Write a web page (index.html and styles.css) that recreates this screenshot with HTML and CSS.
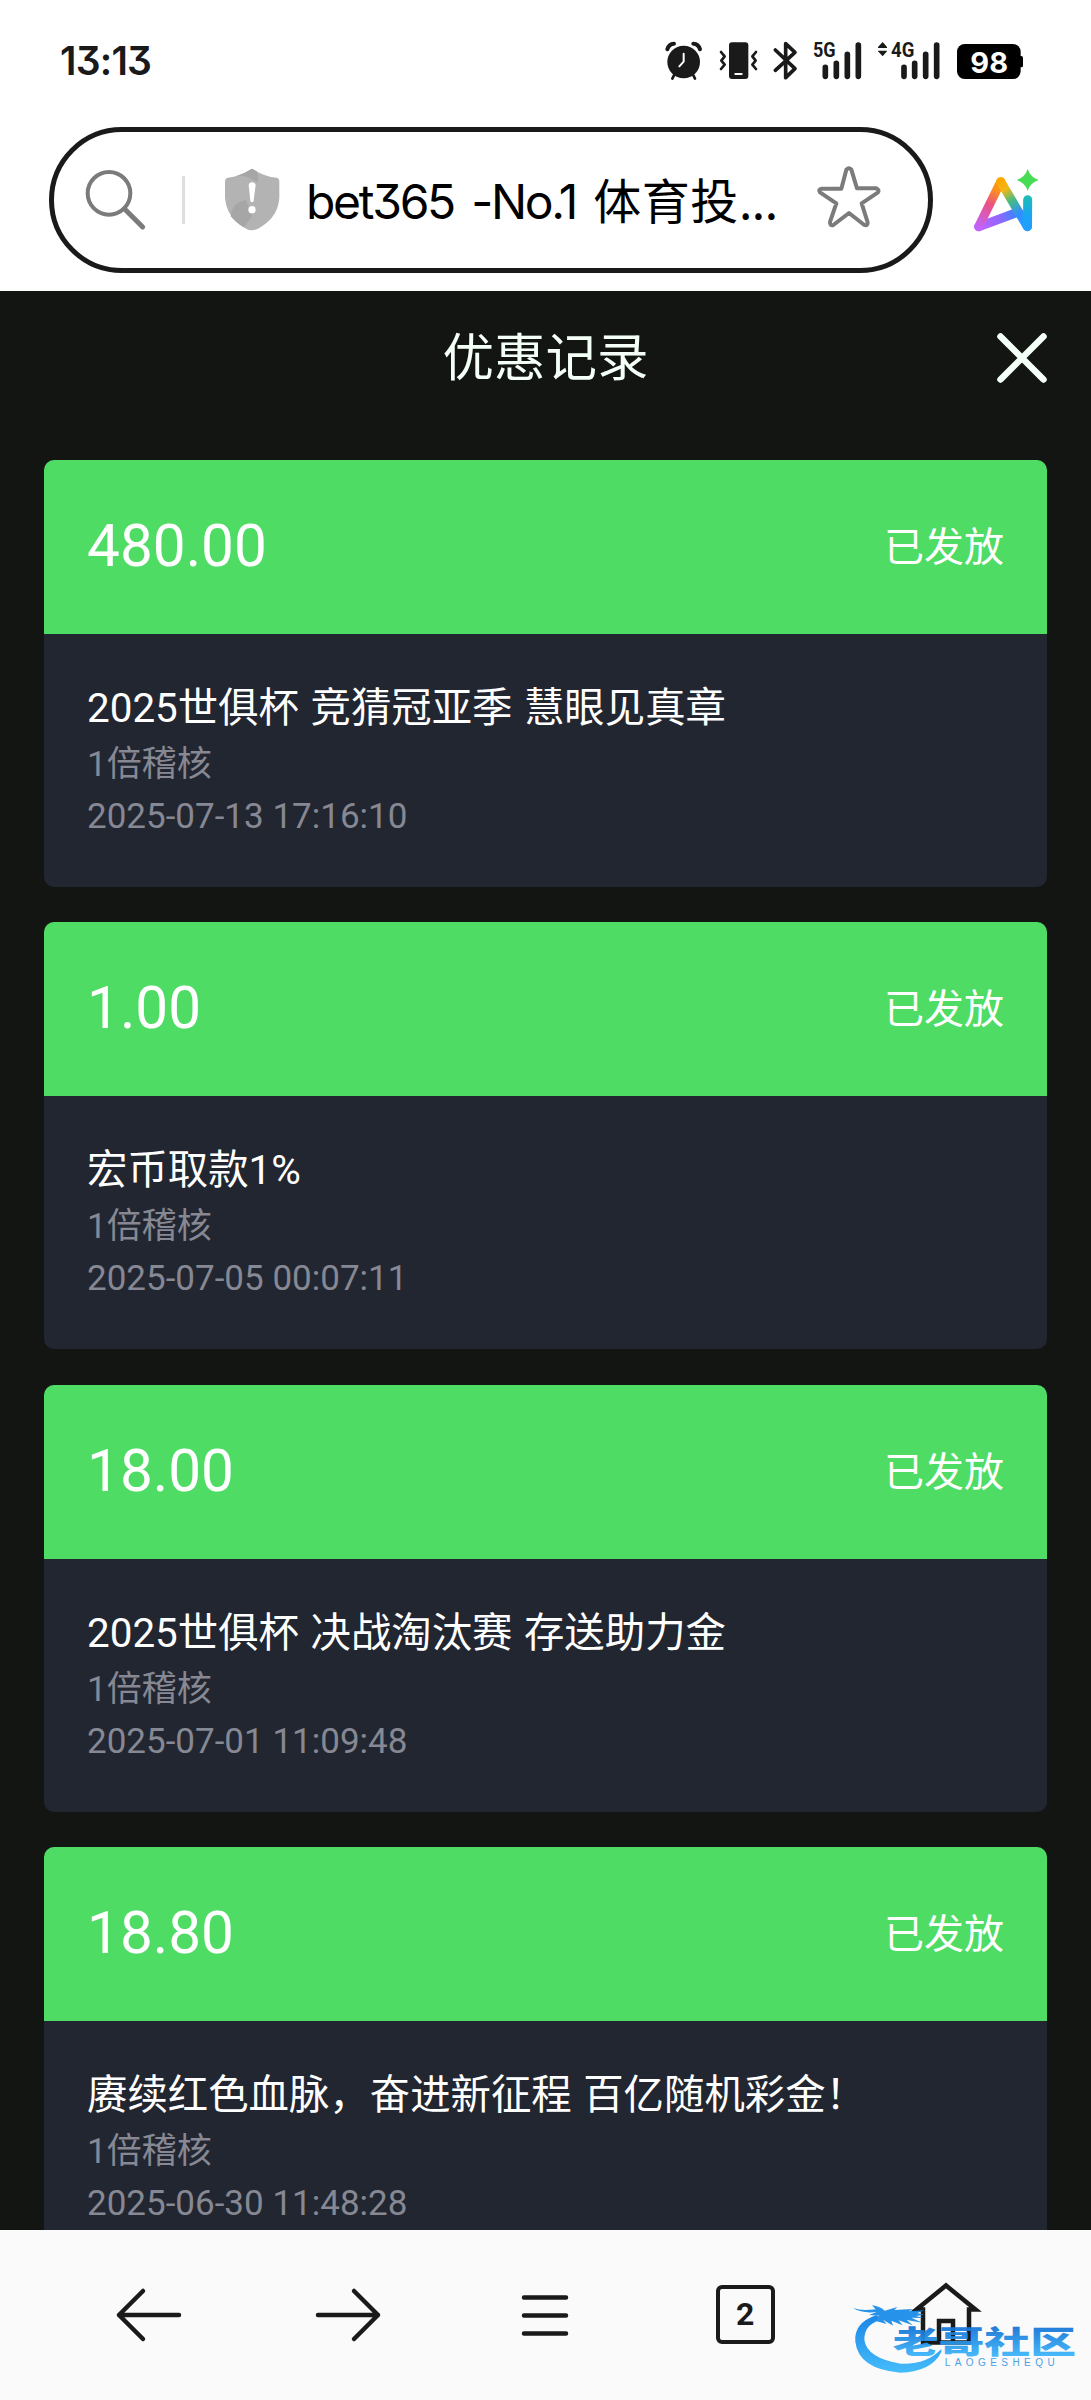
FILE: index.html
```html
<!DOCTYPE html>
<html lang="zh-CN">
<head>
<meta charset="utf-8">
<title>优惠记录</title>
<link rel="stylesheet" href="styles.css">
</head>
<body>
<header class="browser">
  <div class="status">
    <span class="clock">13:13</span>
    <div class="status-icons">
      <svg class="alarm" viewBox="75 60 114 126" width="38" height="42">
        <circle cx="131" cy="126" r="49" fill="#1a1a1a"/>
        <path d="M82 88Q86 72 102 71M180 88Q176 72 160 71" fill="none" stroke="#1a1a1a" stroke-width="12" stroke-linecap="round"/>
        <path d="M103 164l-6 12M159 164l6 12" stroke="#1a1a1a" stroke-width="8" stroke-linecap="round"/>
        <path d="M131 101V125L118 139" fill="none" stroke="#fff" stroke-width="6" stroke-linecap="round" stroke-linejoin="round"/>
      </svg>
      <svg class="vibrate" viewBox="238 60 117 126" width="39" height="42">
        <rect x="268" y="67" width="58" height="110" rx="9" fill="#1a1a1a"/>
        <path d="M287 162h19" stroke="#fff" stroke-width="6" stroke-linecap="round"/>
        <path d="M244 96l11 13-10 13 10 12-11 13M349 96l-11 13 10 13-10 12 11 13" fill="none" stroke="#1a1a1a" stroke-width="8" stroke-linecap="round" stroke-linejoin="round"/>
      </svg>
      <svg class="bluetooth" viewBox="400 60 75 126" width="25" height="42">
        <path d="M407 90L466 146L438 173V71L466 97L407 151" fill="none" stroke="#1a1a1a" stroke-width="11" stroke-linecap="round" stroke-linejoin="round"/>
      </svg>
      <svg class="signal5" viewBox="515 60 150 126" width="50" height="42">
        <text class="net" x="518" y="111" textLength="68" lengthAdjust="spacingAndGlyphs">5G</text>
        <path d="M555 142v27M588 130v39M621 103v66M654 75v94" stroke="#1a1a1a" stroke-width="17" stroke-linecap="round"/>
      </svg>
      <svg class="signal4" viewBox="711 60 192 126" width="64" height="42">
        <path d="M728 66l13 15v3h-27v-3zM728 109l13-15v-2h-27v2z" fill="#1a1a1a"/>
        <text class="net" x="753" y="111" textLength="70" lengthAdjust="spacingAndGlyphs">4G</text>
        <path d="M792 142v27M824 130v39M857 103v66M890 75v94" stroke="#1a1a1a" stroke-width="17" stroke-linecap="round"/>
      </svg>
      <svg class="battery" viewBox="951 60 201 126" width="67" height="42">
        <rect x="951" y="72" width="191" height="105" rx="23" fill="#000"/>
        <rect x="1135" y="108" width="14" height="34" rx="5" fill="#000"/>
        <text class="level" x="991" y="158" textLength="113" lengthAdjust="spacingAndGlyphs">98</text>
      </svg>
    </div>
  </div>
  <div class="address-row">
    <div class="pill">
      <svg class="search" viewBox="255 448 183 184" width="61" height="61.3" fill="none" stroke="#7b7b7b">
        <circle cx="327" cy="521" r="64" stroke-width="12"/>
        <path d="M373 567L428 622" stroke-width="15" stroke-linecap="round"/>
      </svg>
      <i class="divider"></i>
      <svg class="shield" viewBox="670 445 168 190" width="56" height="63.3">
        <path d="M754 447Q791 471 828 474Q836 476 836 486V535Q832 590 782 621Q766 632 754 632Q742 632 726 621Q678 590 673 535V486Q673 476 681 474Q717 471 754 447z" fill="#b3b3b3"/>
        <path d="M754 447Q729 463 705 470Q735 463 771 489Q774 470 768 455zM736 541Q694 548 690 590Q706 610 730 623L754 590z" fill="#a6a6a6"/>
        <path d="M744 496Q745 488 754 488Q764 488 765 496L759 543Q758 548 754 548Q750 548 749 543z" fill="#fff"/>
        <circle cx="754" cy="570" r="11" fill="#fff"/>
      </svg>
      <span class="url">bet365 -No.1 <b class="han">体育投<span class="dots">...</span></b></span>
      <svg class="star" viewBox="110 136 192 184" width="64" height="61.3">
        <path d="M198 147Q206 139 213 147L230 203H288Q299 208 292 216L244 248L262 305Q262 317 252 313L206 277L159 313Q148 316 149 304L168 248L119 215Q112 207 124 204H183z" fill="none" stroke="#7b7b7b" stroke-width="12" stroke-linejoin="round"/>
      </svg>
    </div>
    <svg class="ai" viewBox="575 144 200 192" width="66.7" height="64">
      <defs>
        <linearGradient id="ai-left" gradientUnits="userSpaceOnUse" x1="660" y1="180" x2="590" y2="325"><stop offset="0" stop-color="#ff9d00"/><stop offset=".22" stop-color="#fb9020"/><stop offset=".5" stop-color="#eb5184"/><stop offset="1" stop-color="#c064ff"/></linearGradient>
        <linearGradient id="ai-base" gradientUnits="userSpaceOnUse" x1="590" y1="320" x2="705" y2="275"><stop offset="0" stop-color="#c163ff"/><stop offset=".5" stop-color="#9666ff"/><stop offset="1" stop-color="#3b83ff"/></linearGradient>
        <linearGradient id="ai-right" gradientUnits="userSpaceOnUse" x1="658" y1="184" x2="738" y2="320"><stop offset="0" stop-color="#ffa800"/><stop offset=".18" stop-color="#efb818"/><stop offset=".42" stop-color="#45bd83"/><stop offset=".7" stop-color="#308eff"/><stop offset="1" stop-color="#1ca2ff"/></linearGradient>
        <linearGradient id="ai-stem" gradientUnits="userSpaceOnUse" x1="725" y1="225" x2="752" y2="330"><stop offset="0" stop-color="#1cc0ac"/><stop offset=".6" stop-color="#1aa4f5"/><stop offset="1" stop-color="#249cff"/></linearGradient>
      </defs>
      <g fill="none" stroke-width="27" stroke-linecap="round">
        <path d="M592 320L708 277" stroke="url(#ai-base)"/>
        <path d="M658 185L592 320" stroke="url(#ai-left)"/>
        <path d="M658 185L738 320" stroke="url(#ai-right)"/>
        <path d="M739 239L738.500 320" stroke="url(#ai-stem)"/>
      </g>
      <path d="M739 147Q747 172 772 180Q747 188 739 212Q731 188 706 180Q731 172 739 147z" fill="#48dc55"/>
    </svg>
  </div>
</header>
<main class="page">
  <div class="title-bar">
    <h1 class="title">优惠记录</h1>
    <svg class="close" viewBox="0 0 50 50" width="50" height="50"><path d="M3.500 3.500l43 43M46.500 3.500l-43 43" stroke="#f3fff7" stroke-width="6.500" stroke-linecap="round"/></svg>
  </div>
  <section class="records">
    <article class="card">
      <div class="card-head"><span class="amount">480.00</span><span class="state">已发放</span></div>
      <div class="card-body"><h2 class="name">2025世俱杯 竞猜冠亚季 慧眼见真章</h2><p class="meta">1倍稽核</p><p class="meta">2025-07-13 17:16:10</p></div>
    </article>
    <article class="card">
      <div class="card-head"><span class="amount">1.00</span><span class="state">已发放</span></div>
      <div class="card-body"><h2 class="name">宏币取款1%</h2><p class="meta">1倍稽核</p><p class="meta">2025-07-05 00:07:11</p></div>
    </article>
    <article class="card">
      <div class="card-head"><span class="amount">18.00</span><span class="state">已发放</span></div>
      <div class="card-body"><h2 class="name">2025世俱杯 决战淘汰赛 存送助力金</h2><p class="meta">1倍稽核</p><p class="meta">2025-07-01 11:09:48</p></div>
    </article>
    <article class="card">
      <div class="card-head"><span class="amount">18.80</span><span class="state">已发放</span></div>
      <div class="card-body"><h2 class="name">赓续红色血脉，奋进新征程 百亿随机彩金！</h2><p class="meta">1倍稽核</p><p class="meta">2025-06-30 11:48:28</p></div>
    </article>
  </section>
</main>
<nav class="nav">
  <svg class="nav-icon" viewBox="0 0 66 64" width="66" height="64"><path d="M63 32H3M27 8L3 32L27 56"/></svg>
  <svg class="nav-icon" viewBox="0 0 66 64" width="66" height="64"><path d="M3 32H63M39 8L63 32L39 56"/></svg>
  <svg class="nav-icon menu" viewBox="0 0 50 64" width="50" height="64"><path d="M4 14.500H46M4 32.500H46M4 50.500H46"/></svg>
  <span class="tabs">2</span>
  <svg class="nav-icon home" viewBox="0 0 66 66" width="66" height="66"><path d="M10 28.500H3.500L33 4.500L62.500 28.500H56V61.500H10zM26 61V40H40V61"/></svg>
</nav>
<svg class="watermark" viewBox="95 250 675 215" width="225" height="71.7">
  <defs>
    <linearGradient id="wm" x1="0" y1="0" x2="0" y2="1"><stop offset="0" stop-color="#0b7ee6"/><stop offset="1" stop-color="#38b8fb"/></linearGradient>
    <linearGradient id="wm-text" gradientUnits="userSpaceOnUse" x1="0" y1="322" x2="0" y2="408"><stop offset="0" stop-color="#1273d6"/><stop offset="1" stop-color="#3bb4fa"/></linearGradient>
  </defs>
  <path d="M167 287Q100 310 105 366Q114 448 240 459Q334 456 363 397V388Q319 435 242 432Q139 415 132 360Q132 309 192 299z" fill="url(#wm)"/>
  <path d="M98 265Q123 275 166 269L155 257Q181 261 193 273L231 262L222 271L278 268L266 275L313 272L291 280L312 285L287 289L310 295L273 294L306 309L259 301L277 317L235 302L247 317L213 303L218 318L188 300L199 313L164 303L177 288L146 286L169 277Q125 282 98 265z" fill="#168be9"/>
  <text class="wm-name" x="217" y="400" textLength="550" lengthAdjust="spacingAndGlyphs" fill="url(#wm-text)">老哥社区</text>
  <text class="wm-latin" x="373" y="439" textLength="330" lengthAdjust="spacing">LAOGESHEQU</text>
</svg>
</body>
</html>
```
FILE: styles.css
```css
* { box-sizing: border-box; }
body {
  margin: 0;
  width: 1091px;
  height: 2400px;
  overflow: hidden;
  position: relative;
  display: flex;
  flex-direction: column;
  background: #121512;
  font-family: Roboto, "Noto Sans CJK SC", sans-serif;
}
svg { display: block; flex: none; overflow: visible; }
h1, h2, p { margin: 0; font-weight: 400; }

.browser { flex: none; height: 291px; background: #fff; }
.status {
  height: 127px;
  padding: 40px 67px 0 60px;
  display: flex;
  justify-content: space-between;
  align-items: flex-start;
}
.clock {
  font: 600 39px/41px Inter, sans-serif;
  font-feature-settings: "cv09";
  letter-spacing: -0.800px;
  color: #1a1a1a;
}
.status-icons { display: flex; }
.vibrate { margin-left: 16.300px; }
.bluetooth { margin-left: 15px; }
.signal5 { margin-left: 13.300px; }
.signal4 { margin-left: 15.300px; }
.battery { margin-left: 16px; }
.net { font: 700 61px Roboto, sans-serif; fill: #1a1a1a; }
.level { font: 650 87px Inter, sans-serif; fill: #fff; }

.address-row { display: flex; align-items: center; padding-left: 49px; }
.pill {
  width: 884px;
  height: 146px;
  flex: none;
  border: 5px solid #1a1a1a;
  border-radius: 73px;
  display: flex;
  align-items: center;
  padding-left: 31px;
}
.divider { width: 3px; height: 48px; flex: none; margin-left: 36px; background: #dedede; }
.shield { margin-left: 39px; }
.url {
  width: 470px;
  flex: none;
  margin-left: 26px;
  white-space: nowrap;
  font: 400 48px/64px Inter, sans-serif;
  font-feature-settings: "cv09";
  letter-spacing: -2.300px;
  word-spacing: 6px;
  color: #000;
}
.han { font: 400 48px/64px "Noto Sans CJK SC", sans-serif; letter-spacing: 0.600px; }
.dots { letter-spacing: -0.500px; }
.star { margin: 0 0 7px 41px; }
.ai { margin-left: 40px; }

.page { flex: none; height: 1938.500px; overflow: hidden; }
.title-bar {
  height: 169px;
  padding: 0 44px 36px;
  display: grid;
  grid-template-columns: 50px 1fr 50px;
  align-items: center;
}
.title { grid-column: 2; padding-top: 3px; text-align: center; font-size: 51.500px; line-height: 60px; color: #f3fff7; }
.records { padding: 0 44px; display: flex; flex-direction: column; gap: 35.400px; }
.card { flex: none; height: 427px; border-radius: 10px; overflow: hidden; background: #222631; }
.card-head {
  height: 174px;
  padding: 0 43px 2px;
  display: flex;
  align-items: center;
  justify-content: space-between;
  background: #4edc64;
  color: #fff;
}
.amount { font-size: 58.500px; }
.state { padding-bottom: 4px; font-size: 40px; }
.card-body { padding: 45px 43px 0; }
.name { font-size: 40.400px; line-height: 60px; word-spacing: 1.500px; white-space: nowrap; color: #fff; }
.meta { font-size: 35px; line-height: 52px; color: #868893; }

.nav {
  flex: 1;
  padding: 0 48px 0 50px;
  display: grid;
  grid-template-columns: repeat(5, 1fr);
  align-items: center;
  justify-items: center;
  background: #fafafa;
}
.nav-icon { fill: none; stroke: #1a1a1a; stroke-width: 4.500; stroke-linecap: round; stroke-linejoin: round; }
.menu { margin-right: 3px; }
.home { margin-left: 4px; margin-bottom: 2px; stroke-linejoin: miter; }
.tabs {
  width: 59px;
  height: 59px;
  border: 4.500px solid #1a1a1a;
  border-radius: 6px;
  text-align: center;
  font: 700 32px/51px Roboto, sans-serif;
  color: #1a1a1a;
}

.watermark { position: absolute; left: 851.700px; top: 2303.300px; opacity: .93; }
.wm-name { font: 900 92px "Noto Sans CJK SC", sans-serif; }
.wm-latin { font: 400 30px "Liberation Sans", sans-serif; fill: #3a9be6; }
```
